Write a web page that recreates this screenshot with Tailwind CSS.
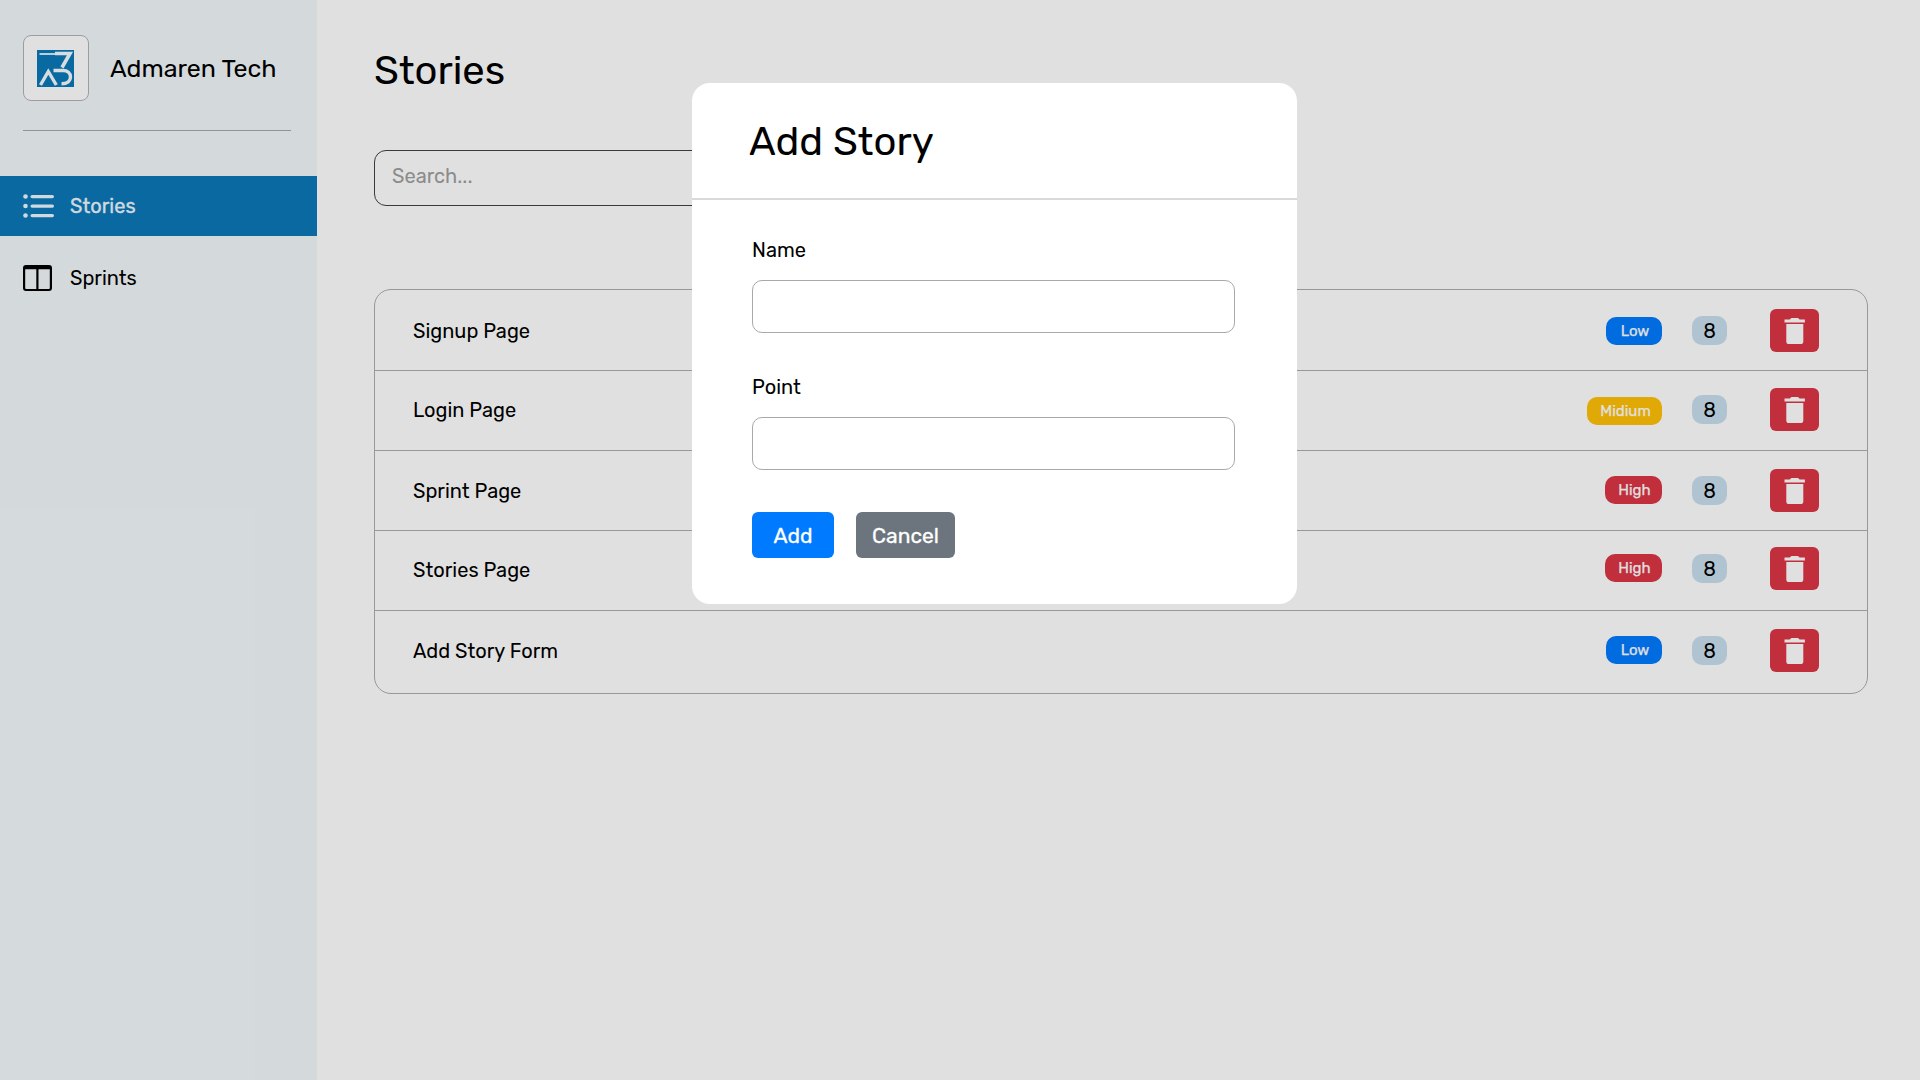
<!DOCTYPE html>
<html lang="en">
<head>
<meta charset="utf-8">
<title>Stories</title>
<script src="https://cdn.jsdelivr.net/npm/@tailwindcss/browser@4"></script>
</head>
<body class="font-[Rubik,Roboto,sans-serif] text-black bg-white">
<svg class="hidden">
  <symbol id="trash" viewBox="0 0 22 28">
    <path fill="currentColor" d="M0.500 2.600h5.400l.6-.9c.3-.4.8-.6 1.300-.6h5.800c.5 0 1 .2 1.300.6l.6.9h5.400v3H0.500z"/>
    <path fill="currentColor" d="M2.300 6.900h17v17.600c0 1.600-1 2.600-2.600 2.600H4.900c-1.600 0-2.600-1-2.600-2.600z"/>
  </symbol>
</svg>
<div class="relative flex h-[1080px] w-[1920px] overflow-hidden">

  <aside class="w-[317px] bg-[#f2f8fb]">
    <div class="ml-[23px] mr-[26px] flex h-[131px] border-b border-[#a3a8ab] pt-[35px]">
      <div class="flex size-[66px] items-center justify-center rounded-[8px] border border-[#b0b4b6] bg-white pr-[2px]">
        <svg class="size-[37px]" viewBox="0 0 37 37" fill="none">
          <rect width="37" height="37" fill="#0b78b8"/>
          <path d="M2.500 4h17" stroke="#d5ebf7" stroke-width="2"/>
          <path d="M18 3.500h15L25 17.500" stroke="#f4fbff" stroke-width="3.600"/>
          <path d="M3.500 35L11.300 21.500L19.300 35" stroke="#f4fbff" stroke-width="3.400"/>
          <path d="M16.500 20.500H26c4.500 0 7.500 2.600 7.500 6.500s-3 6.800-9 6.800" stroke="#f4fbff" stroke-width="3.400"/>
        </svg>
      </div>
      <span class="ml-[21px] mt-[19px] text-[25px] leading-[30px] whitespace-nowrap">Admaren Tech</span>
    </div>
    <nav class="mt-[45px]">
      <a class="flex h-[60px] items-center bg-[#0c78b7] pl-[23px] text-[#ebf7ff]">
        <svg class="h-[24px] w-[31px]" viewBox="0 0 31 24" fill="currentColor">
          <circle cx="2.500" cy="2.500" r="2.300"/><circle cx="2.500" cy="12" r="2.300"/><circle cx="2.500" cy="21.500" r="2.300"/>
          <rect x="7.500" y="0.900" width="23.500" height="3.300" rx="1.600"/><rect x="7.500" y="10.400" width="23.500" height="3.300" rx="1.600"/><rect x="7.500" y="19.900" width="23.500" height="3.300" rx="1.600"/>
        </svg>
        <span class="ml-[16px] text-[20px] leading-6 [-webkit-text-stroke:0.3px]">Stories</span>
      </a>
      <a class="mt-3 flex h-[60px] items-center pl-[23px]">
        <svg class="h-[26px] w-[29px]" viewBox="0 0 29 26">
          <path fill="currentColor" fill-rule="evenodd" d="M3 0h23a3 3 0 0 1 3 3v20a3 3 0 0 1-3 3H3a3 3 0 0 1-3-3V3a3 3 0 0 1 3-3zM2.200 4.300V23c0 .6.300.900.900.900H13.300V4.300zM15.500 4.300V23.900H25.900c.6 0 .900-.300.900-.900V4.300z"/>
        </svg>
        <span class="ml-[18px] text-[20px] leading-6">Sprints</span>
      </a>
    </nav>
  </aside>

  <main class="flex-1 pl-[57px] pr-[52px] pt-[51px]">
    <h1 class="text-[40px] leading-[40px]">Stories</h1>
    <div class="mt-[59px] flex h-[56px] w-[560px] items-center rounded-[12px] border border-[#424242] pb-1 pl-[17px] text-[20px] leading-6 text-[#9f9f9f]">Search...</div>

    <ul class="mt-[83px] h-[405px] rounded-[17px] border border-[#aeaeae] text-[20px] leading-6">
      <li class="h-[81px] border-b border-[#aeaeae] pl-[38px] pr-[48px] pt-[19px]">
        <div class="flex h-[43px] items-center">
          <span class="flex-1">Signup Page</span>
          <span class="flex h-[28px] w-[56px] items-center justify-center rounded-[10px] bg-[#007bff] pl-[2px] text-[15px] leading-5 text-white [-webkit-text-stroke:0.25px]">Low</span>
          <span class="ml-[30px] flex h-[29px] w-[35px] items-center justify-center rounded-[10px] bg-[#c9dfee]">8</span>
          <button class="ml-[43px] flex h-[43px] w-[49px] items-center justify-center rounded-[6px] bg-[#dc3545] text-white"><svg class="h-[28px] w-[22px]"><use href="#trash"/></svg></button>
        </div>
      </li>
      <li class="h-[80px] border-b border-[#aeaeae] pl-[38px] pr-[48px] pt-[17px]">
        <div class="flex h-[43px] items-center">
          <span class="flex-1">Login Page</span>
          <span class="mt-[2px] flex h-[28px] w-[75px] items-center justify-center rounded-[10px] bg-[#ffc107] pl-[2px] text-[15px] leading-5 text-white [-webkit-text-stroke:0.25px]">Midium</span>
          <span class="ml-[30px] flex h-[29px] w-[35px] items-center justify-center rounded-[10px] bg-[#c9dfee]">8</span>
          <button class="ml-[43px] flex h-[43px] w-[49px] items-center justify-center rounded-[6px] bg-[#dc3545] text-white"><svg class="h-[28px] w-[22px]"><use href="#trash"/></svg></button>
        </div>
      </li>
      <li class="h-[80px] border-b border-[#aeaeae] pl-[38px] pr-[48px] pt-[18px]">
        <div class="flex h-[43px] items-center">
          <span class="flex-1">Sprint Page</span>
          <span class="-mt-px flex h-[28px] w-[57px] items-center justify-center rounded-[10px] bg-[#dc3545] pl-[2px] text-[15px] leading-5 text-white [-webkit-text-stroke:0.25px]">High</span>
          <span class="ml-[30px] flex h-[29px] w-[35px] items-center justify-center rounded-[10px] bg-[#c9dfee]">8</span>
          <button class="ml-[43px] flex h-[43px] w-[49px] items-center justify-center rounded-[6px] bg-[#dc3545] text-white"><svg class="h-[28px] w-[22px]"><use href="#trash"/></svg></button>
        </div>
      </li>
      <li class="h-[80px] border-b border-[#aeaeae] pl-[38px] pr-[48px] pt-[16px]">
        <div class="flex h-[43px] items-center">
          <span class="mt-[2px] flex-1">Stories Page</span>
          <span class="-mt-px flex h-[28px] w-[57px] items-center justify-center rounded-[10px] bg-[#dc3545] pl-[2px] text-[15px] leading-5 text-white [-webkit-text-stroke:0.25px]">High</span>
          <span class="ml-[30px] flex h-[29px] w-[35px] items-center justify-center rounded-[10px] bg-[#c9dfee]">8</span>
          <button class="ml-[43px] flex h-[43px] w-[49px] items-center justify-center rounded-[6px] bg-[#dc3545] text-white"><svg class="h-[28px] w-[22px]"><use href="#trash"/></svg></button>
        </div>
      </li>
      <li class="pl-[38px] pr-[48px] pt-[18px]">
        <div class="flex h-[43px] items-center">
          <span class="flex-1">Add Story Form</span>
          <span class="-mt-px flex h-[28px] w-[56px] items-center justify-center rounded-[10px] bg-[#007bff] pl-[2px] text-[15px] leading-5 text-white [-webkit-text-stroke:0.25px]">Low</span>
          <span class="ml-[30px] flex h-[29px] w-[35px] items-center justify-center rounded-[10px] bg-[#c9dfee]">8</span>
          <button class="ml-[43px] flex h-[43px] w-[49px] items-center justify-center rounded-[6px] bg-[#dc3545] text-white"><svg class="h-[28px] w-[22px]"><use href="#trash"/></svg></button>
        </div>
      </li>
    </ul>
  </main>

  <!-- Add Story dialog -->
  <div class="absolute inset-0 bg-black/12">
    <section class="ml-[692px] mt-[83px] h-[521px] w-[605px] rounded-[18px] bg-white">
      <header class="h-[117px] border-b-2 border-[#d9d9d9] pl-[57px] pt-[39px]">
        <h2 class="text-[40px] leading-[40px]">Add Story</h2>
      </header>
      <form class="pl-[60px] pr-[62px] pt-[38px] text-[20px] leading-6">
        <label class="block">Name</label>
        <input class="mt-[18px] block h-[53px] w-full rounded-[10px] border border-[#a9a9a9] px-3">
        <label class="mt-[42px] block">Point</label>
        <input class="mt-[18px] block h-[53px] w-full rounded-[10px] border border-[#a9a9a9] px-3">
        <div class="mt-[42px] flex gap-[22px] text-[21px] leading-6 text-white">
          <button type="button" class="h-[46px] w-[82px] rounded-[6px] bg-[#007bff] pt-px [-webkit-text-stroke:0.3px]">Add</button>
          <button type="button" class="h-[46px] w-[99px] rounded-[6px] bg-[#6c757d] pt-px [-webkit-text-stroke:0.3px]">Cancel</button>
        </div>
      </form>
    </section>
  </div>
</div>
</body>
</html>
